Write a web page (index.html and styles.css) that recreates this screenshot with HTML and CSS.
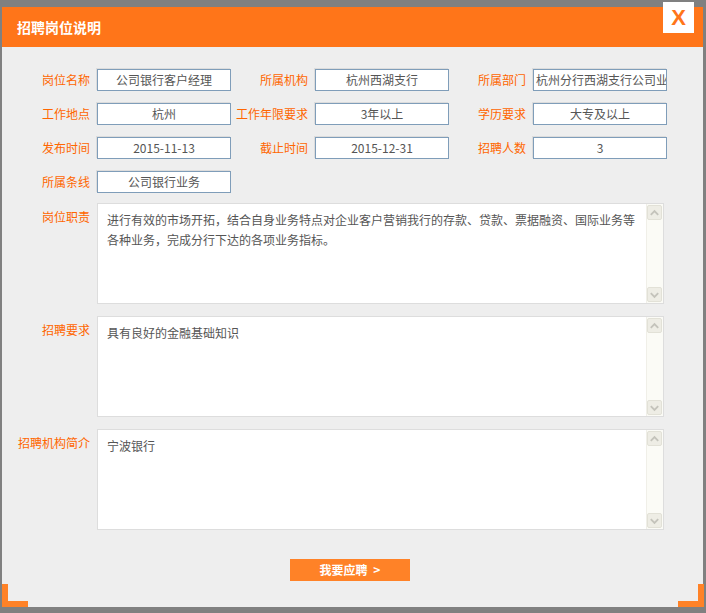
FILE: index.html
```html
<!DOCTYPE html>
<html lang="zh-CN">
<head>
<meta charset="utf-8">
<title>招聘岗位说明</title>
<link rel="stylesheet" href="styles.css">
</head>
<body>
<div class="dialog">
  <div class="header"><h1 class="title">招聘岗位说明</h1></div>
  <button class="close" type="button">X</button>
  <div class="body">
    <div class="fields">
      <div class="label">岗位名称</div><div class="value">公司银行客户经理</div>
      <div class="label">所属机构</div><div class="value">杭州西湖支行</div>
      <div class="label">所属部门</div><div class="value">杭州分行西湖支行公司业务部</div>
      <div class="label">工作地点</div><div class="value">杭州</div>
      <div class="label">工作年限要求</div><div class="value">3年以上</div>
      <div class="label">学历要求</div><div class="value">大专及以上</div>
      <div class="label">发布时间</div><div class="value">2015-11-13</div>
      <div class="label">截止时间</div><div class="value">2015-12-31</div>
      <div class="label">招聘人数</div><div class="value">3</div>
      <div class="label">所属条线</div><div class="value">公司银行业务</div>
    </div>
    <div class="areas">
      <div class="area-row">
        <div class="area-label">岗位职责</div>
        <div class="area">
          <div class="area-text">进行有效的市场开拓，结合自身业务特点对企业客户营销我行的存款、贷款、票据融资、国际业务等各种业务，完成分行下达的各项业务指标。</div>
          <div class="scroll">
            <span class="arrow"><svg width="14" height="14" viewBox="0 0 14 14"><path d="M3 9 L7 5 L11 9" fill="none" stroke="#c4c3bb" stroke-width="2"/></svg></span>
            <span class="arrow"><svg width="14" height="14" viewBox="0 0 14 14"><path d="M3 5 L7 9 L11 5" fill="none" stroke="#c4c3bb" stroke-width="2"/></svg></span>
          </div>
        </div>
      </div>
      <div class="area-row">
        <div class="area-label">招聘要求</div>
        <div class="area">
          <div class="area-text">具有良好的金融基础知识</div>
          <div class="scroll">
            <span class="arrow"><svg width="14" height="14" viewBox="0 0 14 14"><path d="M3 9 L7 5 L11 9" fill="none" stroke="#c4c3bb" stroke-width="2"/></svg></span>
            <span class="arrow"><svg width="14" height="14" viewBox="0 0 14 14"><path d="M3 5 L7 9 L11 5" fill="none" stroke="#c4c3bb" stroke-width="2"/></svg></span>
          </div>
        </div>
      </div>
      <div class="area-row">
        <div class="area-label">招聘机构简介</div>
        <div class="area">
          <div class="area-text">宁波银行</div>
          <div class="scroll">
            <span class="arrow"><svg width="14" height="14" viewBox="0 0 14 14"><path d="M3 9 L7 5 L11 9" fill="none" stroke="#c4c3bb" stroke-width="2"/></svg></span>
            <span class="arrow"><svg width="14" height="14" viewBox="0 0 14 14"><path d="M3 5 L7 9 L11 5" fill="none" stroke="#c4c3bb" stroke-width="2"/></svg></span>
          </div>
        </div>
      </div>
    </div>
    <div class="actions"><button class="apply" type="button">我要应聘 &gt;</button></div>
  </div>
  <span class="corner corner-left"></span>
  <span class="corner corner-right"></span>
</div>
</body>
</html>
```

FILE: styles.css
```css
html, body {
  margin: 0;
  height: 100%;
}
body {
  background: #808080;
  font-family: "Noto Sans CJK SC", "Noto Sans", sans-serif;
  font-size: 12px;
  overflow: hidden;
}
.dialog {
  position: relative;
  margin: 7px 0 0 2px;
  width: 701px;
  height: 600px;
  background: #eeeeee;
  display: flex;
  flex-direction: column;
}
.header {
  height: 40px;
  background: #ff7519;
  display: flex;
  align-items: center;
  padding-left: 15px;
}
.title {
  margin: 0;
  color: #fff;
  font-size: 14px;
  font-weight: bold;
  line-height: 20px;
}
.close {
  position: absolute;
  top: -5px;
  right: 9px;
  width: 31px;
  height: 31px;
  padding: 0;
  border: 0;
  background: #fff;
  color: #ff7519;
  font: bold 22px "Liberation Sans", Arial, sans-serif;
  line-height: 31px;
}
.body {
  flex: 1;
  display: flex;
  flex-direction: column;
  padding-top: 22px;
}
.fields {
  display: grid;
  grid-template-columns: 95px 134px 84px 134px 84px 134px;
  row-gap: 12px;
}
.label {
  color: #ff6600;
  text-align: right;
  padding-right: 7px;
  line-height: 22px;
  white-space: nowrap;
}
.value {
  height: 22px;
  box-sizing: border-box;
  border: 1px solid #7f9db9;
  box-shadow: -1px -1px 0 #dcdcdc;
  background: #fff;
  color: #555;
  text-align: center;
  line-height: 20px;
  padding: 0 2px;
  overflow: hidden;
  white-space: nowrap;
}
.areas {
  margin-top: 10px;
  display: flex;
  flex-direction: column;
  gap: 12px;
}
.area-row {
  display: flex;
}
.area-label {
  width: 88px;
  padding-right: 7px;
  margin-top: 4px;
  text-align: right;
  color: #ff6600;
  line-height: 20px;
  white-space: nowrap;
}
.area {
  width: 567px;
  height: 101px;
  box-sizing: border-box;
  border: 1px solid #dddddd;
  background: #fff;
  display: flex;
}
.area-text {
  flex: 1;
  padding: 6px 5px 0 9px;
  line-height: 20px;
  color: #555;
}
.scroll {
  width: 17px;
  box-sizing: border-box;
  background: #fbfbf6;
  border-left: 1px solid #f0efe8;
  display: flex;
  flex-direction: column;
  justify-content: space-between;
  padding: 1px 0;
}
.arrow {
  width: 15px;
  height: 15px;
  box-sizing: border-box;
  background: #eeede5;
  border: 1px solid #e2e1d7;
  border-radius: 2px;
  display: flex;
  align-items: center;
  justify-content: center;
}
.actions {
  margin-top: 29px;
  display: flex;
  justify-content: center;
  padding-right: 5px;
}
.apply {
  width: 120px;
  height: 22px;
  padding: 0;
  border: 0;
  background: #ff8227;
  color: #fff;
  font-family: "Noto Sans CJK SC", "Noto Sans", sans-serif;
  font-size: 12px;
  font-weight: bold;
  line-height: 22px;
  word-spacing: 3px;
}
.corner {
  position: absolute;
  bottom: 0;
  width: 26px;
  height: 23px;
  box-sizing: border-box;
  border-bottom: 6px solid #ff8227;
}
.corner-left {
  left: 0;
  border-left: 6px solid #ff8227;
}
.corner-right {
  right: -1px;
  border-right: 6px solid #ff8227;
}
```
